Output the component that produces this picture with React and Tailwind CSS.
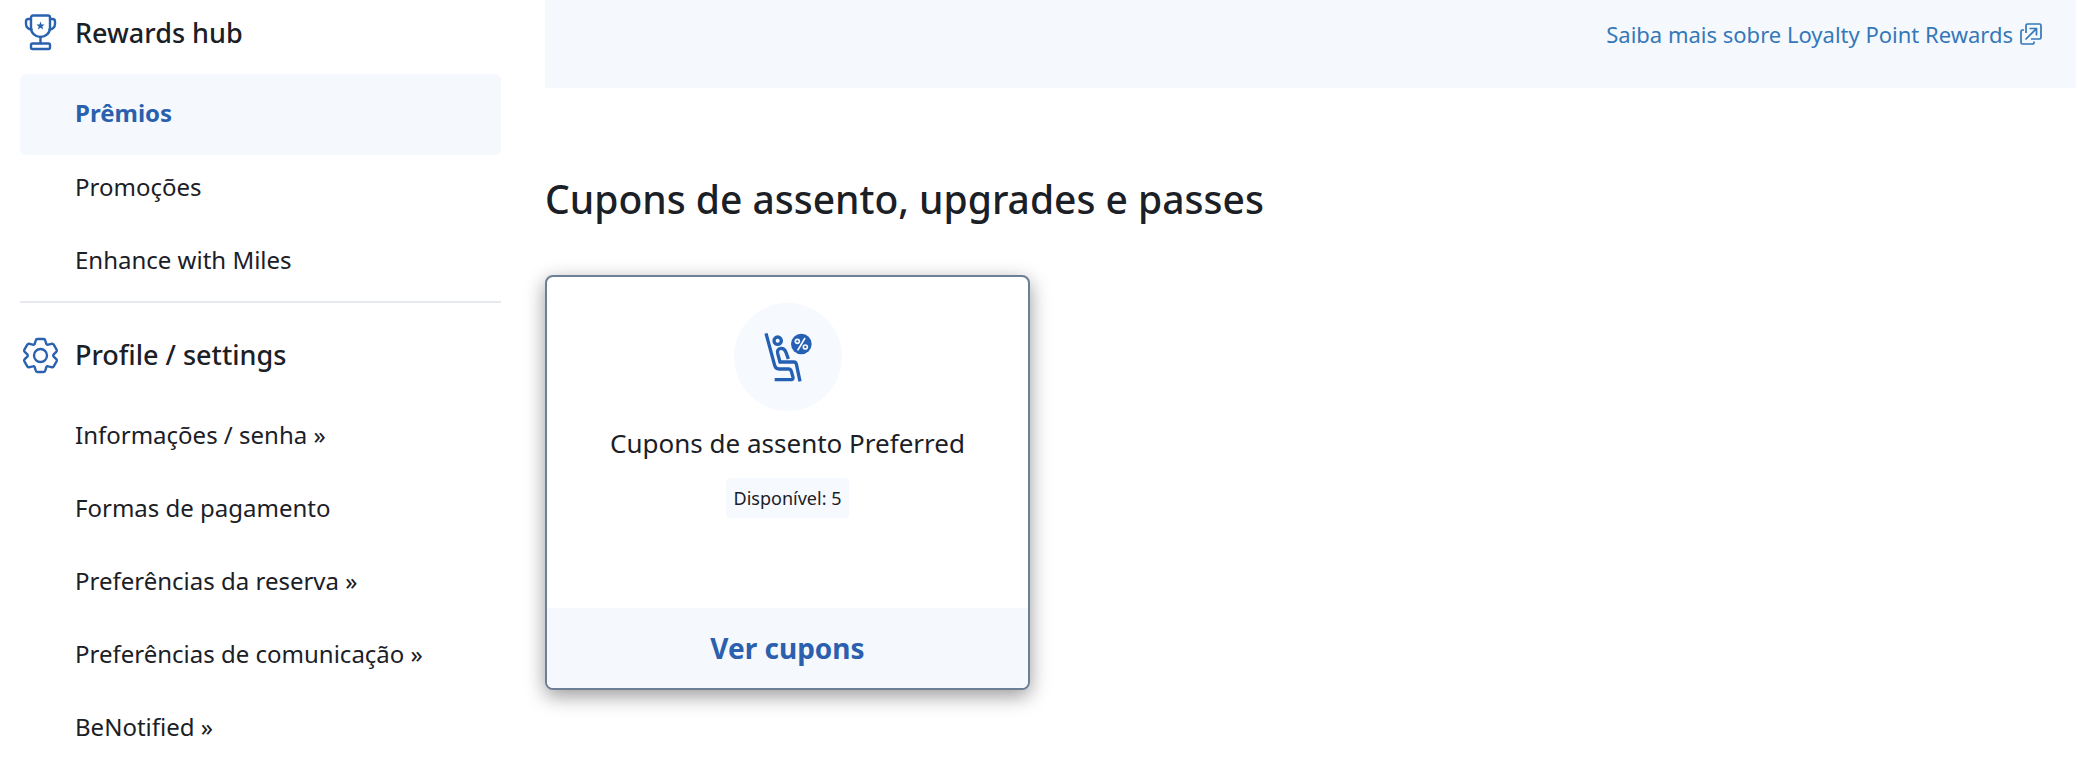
// Rewards page: account side menu plus the list of available coupons
import React from "react";

const REWARDS_LINKS = [
  { label: "Promoções", href: "#promocoes" },
  { label: "Enhance with Miles", href: "#enhance" },
];

const PROFILE_LINKS = [
  { label: "Informações / senha »", href: "#informacoes" },
  { label: "Formas de pagamento", href: "#pagamento" },
  { label: "Preferências da reserva »", href: "#reserva" },
  { label: "Preferências de comunicação »", href: "#comunicacao" },
  { label: "BeNotified »", href: "#benotified" },
];

const COUPONS = [{ id: "preferred", title: "Cupons de assento Preferred", available: 5 }];

function TrophyIcon() {
  return (
    <svg viewBox="0 0 40 40" className="size-10 shrink-0" fill="none" stroke="#2a62b0" strokeWidth="2.400" strokeLinejoin="round" strokeLinecap="round" aria-hidden="true">
      <path d="M13 2.500h15a2 2 0 0 1 2 2V15c0 5-4.500 9-9.500 9S11 20 11 15V4.500a2 2 0 0 1 2-2Z" />
      <path d="M11 6H8.500A2.500 2.500 0 0 0 6 8.500V11c0 3 2.500 5.500 5.500 5.500M30 6h2.500A2.500 2.500 0 0 1 35 8.500V11c0 3-2.500 5.500-5.500 5.500M20.500 24v6" />
      <rect x="11" y="30.500" width="19" height="5.500" rx="1.500" />
      <path fill="#2a62b0" stroke="none" d="m20.500 8.600 1.100 2.800 3 .2-2.300 1.900.8 2.900-2.600-1.600-2.600 1.600.8-2.900-2.300-1.900 3-.2Z" />
    </svg>
  );
}

function GearIcon() {
  return (
    <svg viewBox="-20.5 -20.5 40 40" className="size-10 shrink-0" fill="none" stroke="#2a62b0" strokeWidth="2.400" strokeLinejoin="round" aria-hidden="true">
      <path d="M-5.800-11.600-4.800-15Q-4.500-16.500-3-16.500H3Q4.500-16.500 4.800-15L5.800-11.600Q6.400-10.500 7.700-10.900L11-11.700Q12.500-12 13.200-10.800L16.100-5.900Q16.800-4.600 15.800-3.600L12.900-.8Q12.500 0 12.900.8L15.800 3.600Q16.800 4.600 16.100 5.900L13.200 10.800Q12.500 12 11 11.700L7.700 10.900Q6.400 10.500 5.800 11.600L4.800 15Q4.500 16.500 3 16.500H-3Q-4.500 16.500-4.800 15L-5.800 11.600Q-6.400 10.500-7.700 10.900L-11 11.700Q-12.500 12-13.200 10.800L-16.100 5.900Q-16.800 4.600-15.800 3.600L-12.900.8Q-12.500 0-12.900-.8L-15.800-3.600Q-16.800-4.600-16.100-5.900L-13.200-10.800Q-12.500-12-11-11.700L-7.700-10.900Q-6.400-10.500-5.800-11.600Z" />
      <circle r="6.500" />
    </svg>
  );
}

function ExternalIcon() {
  return (
    <svg viewBox="0 0 22 22" className="size-[22px] shrink-0" fill="none" stroke="#3578b8" strokeWidth="1.700" strokeLinejoin="round" aria-hidden="true">
      <path d="M6 10V2.500A1.500 1.500 0 0 1 7.500 1h12A1.500 1.500 0 0 1 21 2.500v12a1.500 1.500 0 0 1-1.500 1.500H11" />
      <path d="M4 7H2.500A1.500 1.500 0 0 0 1 8.500v11A1.500 1.500 0 0 0 2.500 21h10a1.500 1.500 0 0 0 1.500-1.500V18.500M5.500 16.500 16.500 5.500M9.500 5.500h7v7" />
    </svg>
  );
}

function SeatCouponIcon() {
  return (
    <svg viewBox="0 0 150 150" className="size-[50px]" fill="none" stroke="#2660b4" strokeWidth="10" aria-hidden="true">
      <path d="M9 4 35 100q3 11 13 11h29q6 0 8 7l5 18q1 7-5 7H35" />
      <path d="M76 81 69 61q-5-13-15-12-13 2-10 15l7 26h42q5 0 7 6l11 52" />
      <circle cx="44" cy="26" r="11" />
      <circle cx="115" cy="36" r="31" fill="#2660b4" stroke="none" />
      <g stroke="#f6f9fe" strokeWidth="5">
        <circle cx="103" cy="28" r="6" />
        <circle cx="127" cy="45" r="6" />
        <path d="M126 18 104 55" />
      </g>
    </svg>
  );
}

function MenuHeading({ icon, children }) {
  return (
    <h2 className="flex h-[65px] items-center gap-[15px] text-[27px] leading-8 font-medium">
      {icon}
      {children}
    </h2>
  );
}

function MenuLinks({ links }) {
  return (
    <ul className="flex flex-col gap-[9px]">
      {links.map((l) => (
        <li key={l.href}>
          <a href={l.href} className="flex h-16 items-center pl-[55px] hover:underline">
            {l.label}
          </a>
        </li>
      ))}
    </ul>
  );
}

function CouponCard({ coupon }) {
  return (
    <article className="flex min-h-[415px] flex-col overflow-hidden rounded-lg border-2 border-[#6b7f95] bg-white shadow-[0_6px_20px_rgba(0,0,0,0.4)]">
      <div className="flex flex-1 flex-col items-center pt-[26px]">
        <div className="flex size-[108px] items-center justify-center rounded-full bg-[#f6f9fe]">
          <SeatCouponIcon />
        </div>
        <h3 className="mt-3 text-[26px] leading-10">{coupon.title}</h3>
        <p className="mt-[15px] rounded bg-[#f6f9fe] px-2 text-lg leading-10">
          Disponível: {coupon.available}
        </p>
      </div>
      <button type="button" className="h-20 bg-[#f5f9fe] text-[28px] font-bold text-[#2a60ad]">
        Ver cupons
      </button>
    </article>
  );
}

export default function App() {
  return (
    <div className="flex min-h-screen bg-white font-['Noto_Sans','Open_Sans',sans-serif] text-[#1b2026]">
      <nav aria-label="Account" className="w-[545px] shrink-0 pr-11 pl-5 text-2xl">
        <MenuHeading icon={<TrophyIcon />}>Rewards hub</MenuHeading>
        <a
          href="#premios"
          aria-current="page"
          className="mt-[9px] flex h-[81px] items-center rounded-md bg-[#f5f9fe] pb-[3px] pl-[55px] font-bold text-[#2a60ad]"
        >
          Prêmios
        </a>
        <MenuLinks links={REWARDS_LINKS} />
        <hr className="mt-[9px] mb-[19px] border-t-2 border-[#e6e9ed]" />
        <MenuHeading icon={<GearIcon />}>Profile / settings</MenuHeading>
        <div className="mt-4">
          <MenuLinks links={PROFILE_LINKS} />
        </div>
      </nav>

      <main className="min-w-0 flex-1">
        <div className="flex h-[88px] justify-end bg-[#f5f9fe] pt-[18px] pr-[34px]">
          <a href="#saiba-mais" className="flex h-8 items-center gap-[7px] text-[22px] text-[#3578b8]">
            Saiba mais sobre Loyalty Point Rewards
            <ExternalIcon />
          </a>
        </div>
        <h1 className="mt-[81px] text-[39px] leading-[60px] font-medium">Cupons de assento, upgrades e passes</h1>
        <div className="mt-[46px] grid grid-cols-3 gap-[21px] pr-[34px]">
          {COUPONS.map((c) => (
            <CouponCard key={c.id} coupon={c} />
          ))}
        </div>
      </main>
    </div>
  );
}
